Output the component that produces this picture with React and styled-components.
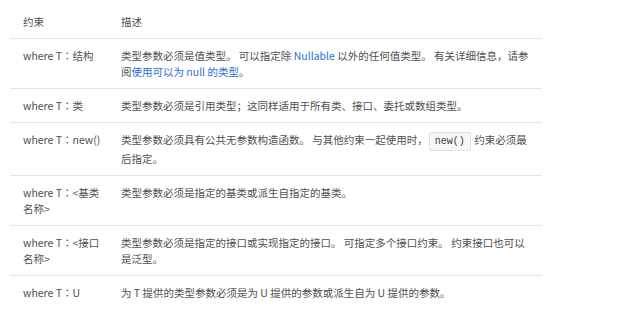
import React from 'react';
import styled, { createGlobalStyle } from 'styled-components';

const GlobalStyle = createGlobalStyle`
  body {
    margin: 0;
    background: #fff;
    font-family: "Noto Sans CJK SC", "Noto Sans", sans-serif;
  }
`;

const Page = styled.div`
  padding: 5px 10px;
`;

const Table = styled.table`
  width: 532px;
  border-collapse: collapse;
  table-layout: fixed;
  font-size: 10.5px;
  line-height: 16px;
  color: #4f4f4f;
`;

const HeadCell = styled.th`
  text-align: left;
  font-weight: normal;
  color: #505050;
  padding: ${({ $first }) => ($first ? '9px 6px 8px 13px' : '9px 12px 8px 13px')};
  width: ${({ $first }) => ($first ? '98px' : 'auto')};
  box-sizing: border-box;
  border-bottom: 1px solid #e4e4e4;
`;

const Row = styled.tr`
  border-bottom: ${({ $last }) => ($last ? 'none' : '1px solid #e4e4e4')};
`;

const Cell = styled.td`
  vertical-align: top;
  padding: ${({ $first }) => ($first ? '9px 6px 8px 13px' : '9px 12px 8px 13px')};
`;

const Colon = styled.span`
  font-family: "Noto Sans CJK TC", sans-serif;
`;

const Link = styled.a`
  color: #2c6fcf;
  text-decoration: none;
`;

const Code = styled.code`
  display: inline-block;
  vertical-align: middle;
  font-family: "Liberation Mono", "DejaVu Sans Mono", monospace;
  font-size: 10px;
  line-height: 13px;
  color: #3a3a3a;
  padding: 2px 5px;
  margin: 0 1px;
  background: #f6f6f6;
  border: 1px solid #dedede;
  border-radius: 2px;
`;

const rows = [
  {
    name: '结构',
    description: (
      <>
        类型参数必须是值类型。 可以指定除 <Link href="#">Nullable</Link> 以外的任何值类型。 有关详细信息，请参阅
        <Link href="#">使用可以为 null 的类型</Link>。
      </>
    ),
  },
  {
    name: '类',
    description: '类型参数必须是引用类型；这同样适用于所有类、接口、委托或数组类型。',
  },
  {
    name: 'new()',
    description: (
      <>
        类型参数必须具有公共无参数构造函数。 与其他约束一起使用时，<Code>new()</Code> 约束必须最后指定。
      </>
    ),
  },
  {
    name: '<基类名称>',
    description: '类型参数必须是指定的基类或派生自指定的基类。',
  },
  {
    name: '<接口名称>',
    description: '类型参数必须是指定的接口或实现指定的接口。 可指定多个接口约束。 约束接口也可以是泛型。',
  },
  {
    name: 'U',
    description: '为 T 提供的类型参数必须是为 U 提供的参数或派生自为 U 提供的参数。',
  },
];

const App = () => (
  <Page>
    <GlobalStyle />
    <Table>
      <thead>
        <tr>
          <HeadCell $first>约束</HeadCell>
          <HeadCell>描述</HeadCell>
        </tr>
      </thead>
      <tbody>
        {rows.map((row, i) => (
          <Row key={row.name} $last={i === rows.length - 1}>
            <Cell $first>
              where T<Colon>：</Colon>{row.name}
            </Cell>
            <Cell>{row.description}</Cell>
          </Row>
        ))}
      </tbody>
    </Table>
  </Page>
);

export default App;
